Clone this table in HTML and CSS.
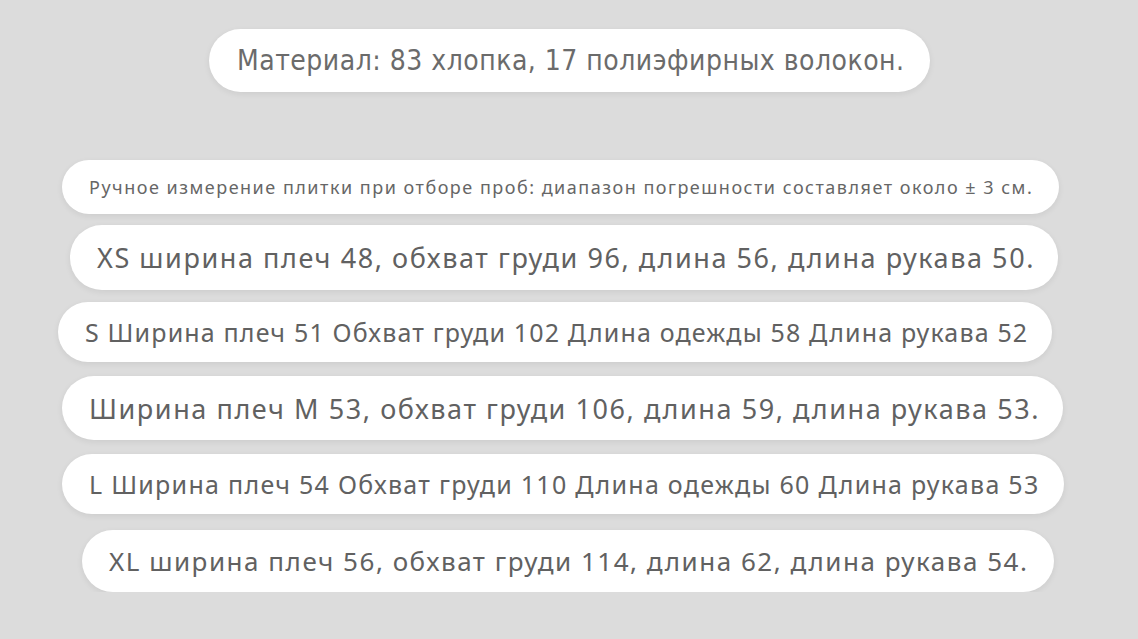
FILE: index.html
```html
<!DOCTYPE html>
<html lang="ru">
<head>
    <meta charset="UTF-8">
    <meta name="viewport" content="width=device-width, initial-scale=1.0">
    <title>Размеры</title>
    <link rel="stylesheet" href="styles.css">
</head>
<body>
    <div class="sheet">
        <div class="pill material">Материал: 83 хлопка, 17 полиэфирных волокон.</div>

        <div class="pill note">Ручное измерение плитки при отборе проб: диапазон погрешности составляет около ± 3 см.</div>
        <div class="pill size xs">XS ширина плеч 48, обхват груди 96, длина 56, длина рукава 50.</div>
        <div class="pill size s">S Ширина плеч 51 Обхват груди 102 Длина одежды 58 Длина рукава 52</div>
        <div class="pill size m">Ширина плеч M 53, обхват груди 106, длина 59, длина рукава 53.</div>
        <div class="pill size l">L Ширина плеч 54 Обхват груди 110 Длина одежды 60 Длина рукава 53</div>
        <div class="pill size xl">XL ширина плеч 56, обхват груди 114, длина 62, длина рукава 54.</div>
    </div>
</body>
</html>
```

FILE: styles.css
```css
body {
    margin: 0;
    background: #dcdcdc;
    font-family: "Noto Sans", "Open Sans", sans-serif;
    color: #616161;
}

.sheet {
    display: flex;
    flex-direction: column;
    align-items: flex-start;
    padding-top: 29px;
}

.pill {
    box-sizing: border-box;
    background: #fff;
    border-radius: 32px;
    box-shadow: 0 2px 6px rgba(0, 0, 0, 0.07);
    padding: 0 27px;
    display: flex;
    align-items: center;
    white-space: nowrap;
}

.material {
    margin-left: 209px;
    width: 721px;
    height: 63px;
    padding-left: 28px;
    font-family: "Liberation Sans Narrow", "DejaVu Sans Condensed", sans-serif;
    font-size: 28px;
    letter-spacing: 0.5px;
    color: #6b6b6b;
}

.note {
    margin-top: 68px;
    margin-left: 62px;
    width: 997px;
    height: 54px;
    font-size: 18px;
    letter-spacing: 1.5px;
    color: #666;
}

.size {
    font-size: 27px;
    letter-spacing: 1.57px;
}

.xs {
    margin-top: 11px;
    margin-left: 70px;
    width: 988px;
    height: 65px;
}

.s {
    margin-top: 12px;
    margin-left: 58px;
    width: 994px;
    height: 60px;
    font-size: 25px;
    letter-spacing: 1.16px;
}

.m {
    margin-top: 14px;
    margin-left: 62px;
    width: 1001px;
    height: 64px;
}

.l {
    margin-top: 14px;
    margin-left: 62px;
    width: 1002px;
    height: 60px;
    font-size: 25px;
    letter-spacing: 1.28px;
}

.xl {
    margin-top: 16px;
    margin-left: 82px;
    width: 972px;
    height: 62px;
    font-size: 26px;
    letter-spacing: 1.52px;
}
```
